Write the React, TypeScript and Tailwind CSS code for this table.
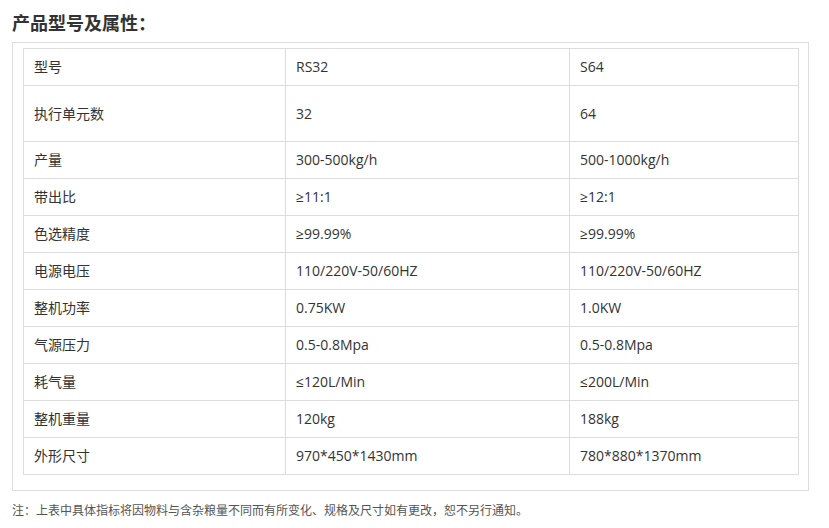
import React from 'react';

const rows: [string, string, string][] = [
  ['型号', 'RS32', 'S64'],
  ['执行单元数', '32', '64'],
  ['产量', '300-500kg/h', '500-1000kg/h'],
  ['带出比', '≥11:1', '≥12:1'],
  ['色选精度', '≥99.99%', '≥99.99%'],
  ['电源电压', '110/220V-50/60HZ', '110/220V-50/60HZ'],
  ['整机功率', '0.75KW', '1.0KW'],
  ['气源压力', '0.5-0.8Mpa', '0.5-0.8Mpa'],
  ['耗气量', '≤120L/Min', '≤200L/Min'],
  ['整机重量', '120kg', '188kg'],
  ['外形尺寸', '970*450*1430mm', '780*880*1370mm'],
];

const App: React.FC = () => {
  return (
    <div
      className="w-[829px] h-[528px] bg-white text-[#333] pl-[12px] pr-[20px]"
      style={{ fontFamily: '"Open Sans", "Noto Sans CJK SC", sans-serif' }}
    >
      <h2 className="pt-[11px] h-[42px] text-[18px] leading-[24px] font-bold text-[#333]">产品型号及属性：</h2>

      <div className="border border-[#ddd] pl-[10px] pr-[9px] pt-[5px] pb-[15px]">
        <table className="w-full border-collapse text-[14px] text-[#333]">
          <colgroup>
            <col className="w-[262px]" />
            <col className="w-[284px]" />
            <col />
          </colgroup>
          <tbody>
            {rows.map((r, i) => (
              <tr key={i} className={i === 1 ? 'h-[56px]' : 'h-[37px]'}>
                {r.map((c, j) => (
                  <td key={j} className="border border-[#ddd] pl-[10px] py-0 align-middle leading-[20px]">
                    {c}
                  </td>
                ))}
              </tr>
            ))}
          </tbody>
        </table>
      </div>

      <p className="mt-[11px] text-[12px] leading-[18px] text-[#555]">
        注：上表中具体指标将因物料与含杂粮量不同而有所变化、规格及尺寸如有更改，恕不另行通知。
      </p>
    </div>
  );
};

export default App;
